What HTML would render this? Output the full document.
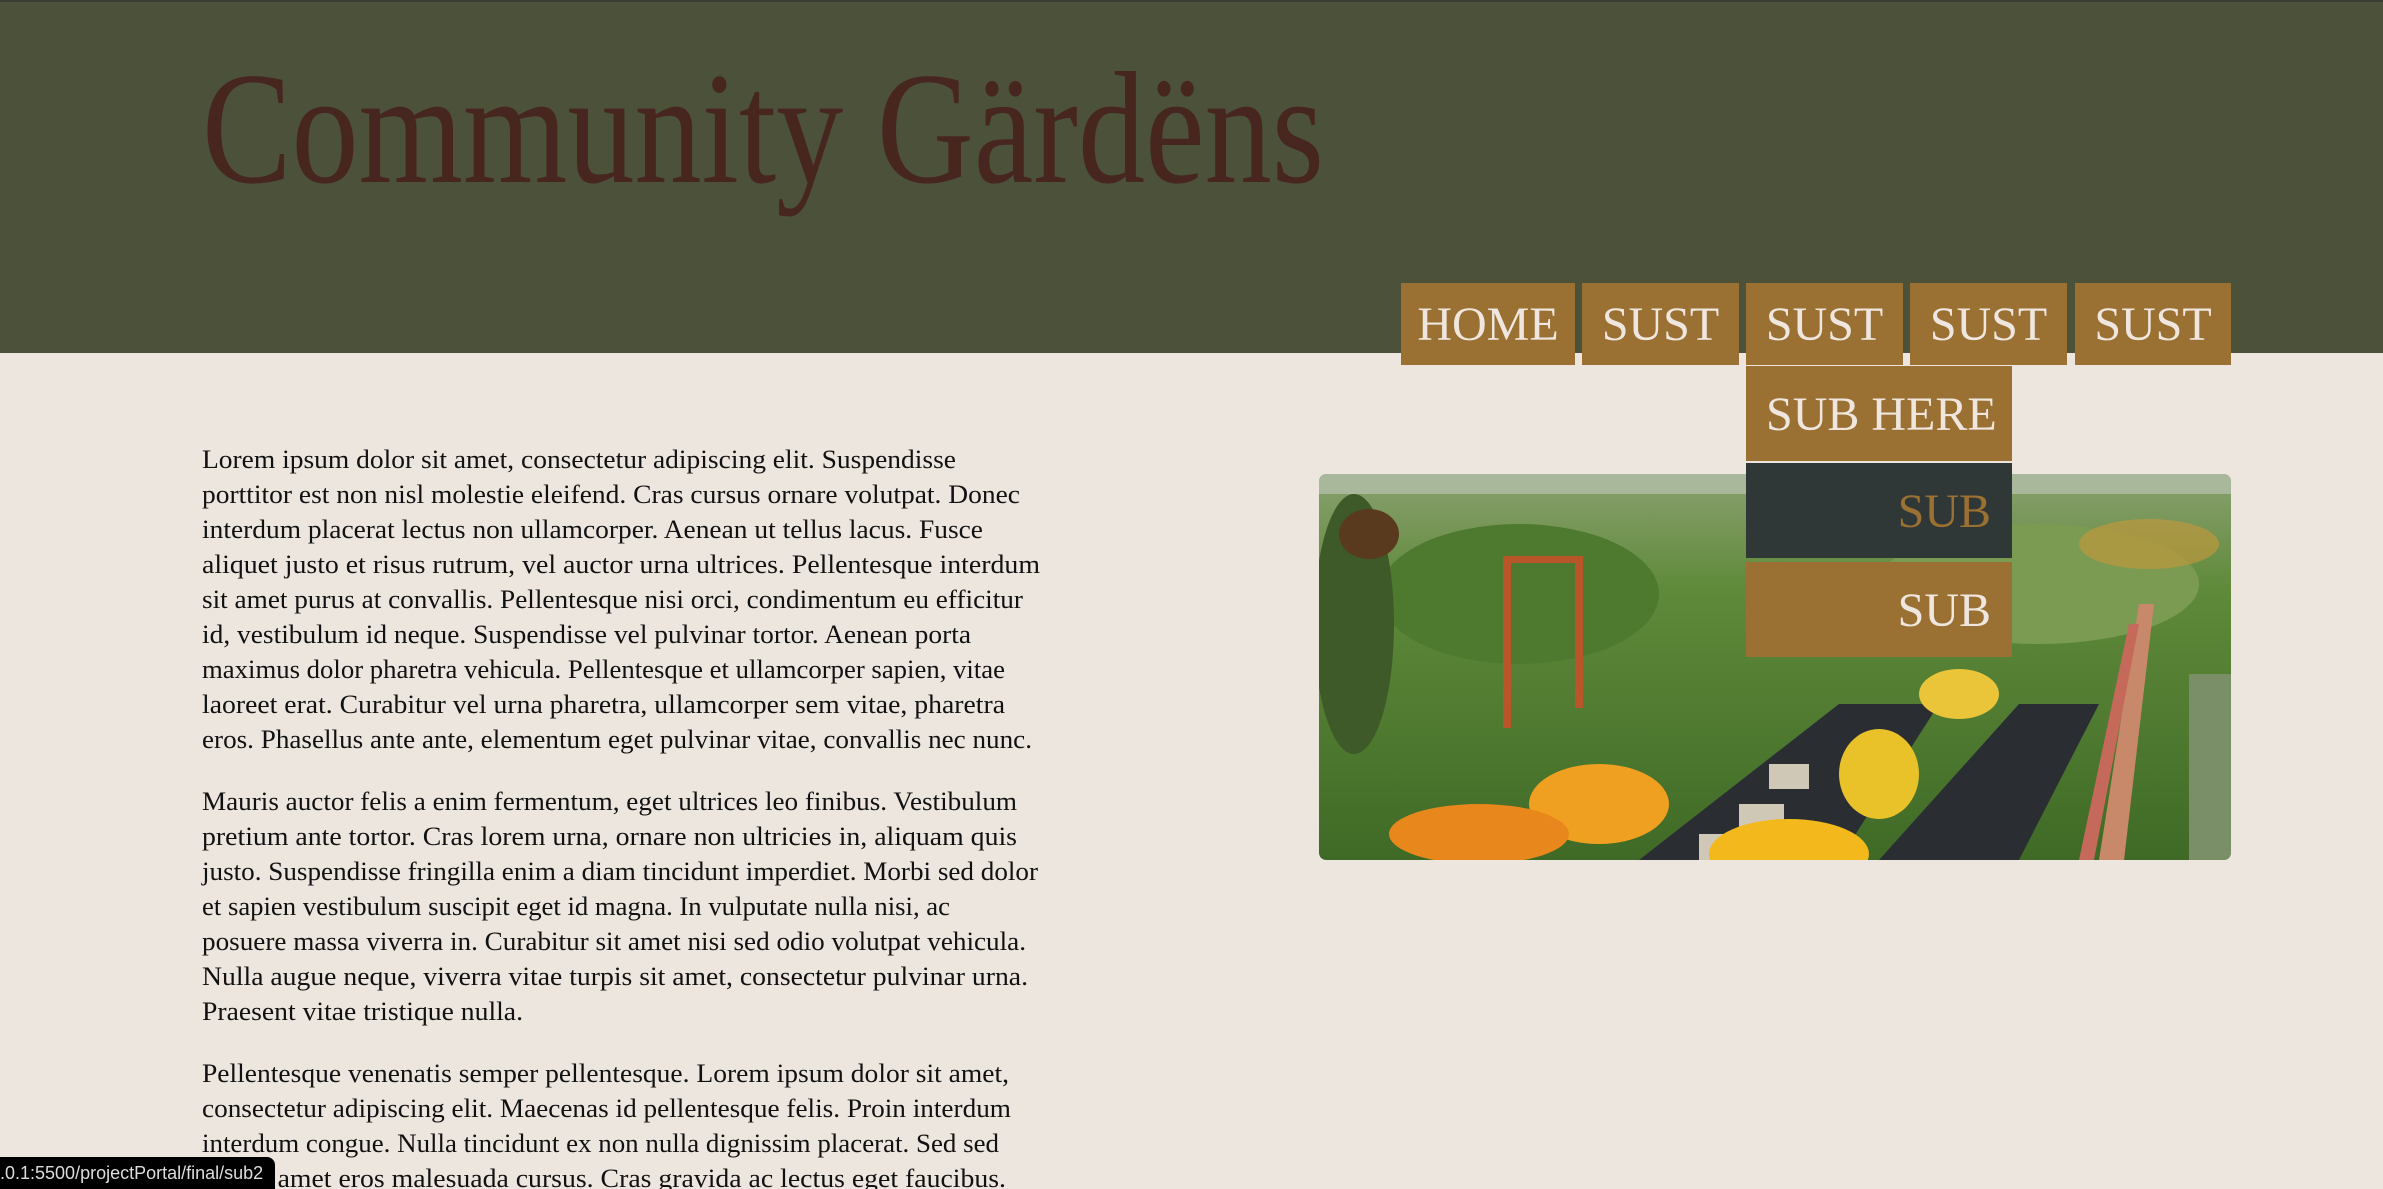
<!DOCTYPE html>
<html><head><meta charset="utf-8"><style>
html,body{margin:0;padding:0;width:2383px;height:1189px;overflow:hidden;background:#ede6df;position:relative}
.hdr{position:absolute;left:0;top:0;width:2383px;height:353px;background:#4c513a;border-top:2px solid #3a3d33;box-sizing:border-box}
.nav{position:absolute;top:283px;height:82px;background:#9a7033;color:#efe7df;font-family:"Liberation Serif",serif;font-size:48px;line-height:84px;text-align:center}
.dd{position:absolute;left:1746px;width:266px;height:95px;font-family:"Liberation Serif",serif;font-size:48px;line-height:97px}
svg{position:absolute;left:0;top:0}
.st{position:absolute;left:0;top:1157px;width:275px;height:34px;background:#000;border-radius:0 8px 0 0;color:#ddd;font-family:"Liberation Sans",sans-serif;font-size:18px;line-height:32px;white-space:nowrap;overflow:hidden}
</style></head><body>
<div class="hdr"></div>
<svg width="2383" height="353"><text x="202" y="182" textLength="1122" lengthAdjust="spacingAndGlyphs" font-family="Liberation Serif" font-size="160" fill="#47261f">Community Gärdëns</text></svg>

<svg width="2383" height="1189" style="z-index:0">
<g font-family="Liberation Serif" font-size="26" fill="#111">
<text x="202" y="468" textLength="754" lengthAdjust="spacingAndGlyphs">Lorem ipsum dolor sit amet, consectetur adipiscing elit. Suspendisse</text>
<text x="202" y="503" textLength="818" lengthAdjust="spacingAndGlyphs">porttitor est non nisl molestie eleifend. Cras cursus ornare volutpat. Donec</text>
<text x="202" y="538" textLength="781" lengthAdjust="spacingAndGlyphs">interdum placerat lectus non ullamcorper. Aenean ut tellus lacus. Fusce</text>
<text x="202" y="573" textLength="838" lengthAdjust="spacingAndGlyphs">aliquet justo et risus rutrum, vel auctor urna ultrices. Pellentesque interdum</text>
<text x="202" y="608" textLength="821" lengthAdjust="spacingAndGlyphs">sit amet purus at convallis. Pellentesque nisi orci, condimentum eu efficitur</text>
<text x="202" y="643" textLength="769" lengthAdjust="spacingAndGlyphs">id, vestibulum id neque. Suspendisse vel pulvinar tortor. Aenean porta</text>
<text x="202" y="678" textLength="803" lengthAdjust="spacingAndGlyphs">maximus dolor pharetra vehicula. Pellentesque et ullamcorper sapien, vitae</text>
<text x="202" y="713" textLength="803" lengthAdjust="spacingAndGlyphs">laoreet erat. Curabitur vel urna pharetra, ullamcorper sem vitae, pharetra</text>
<text x="202" y="748" textLength="830" lengthAdjust="spacingAndGlyphs">eros. Phasellus ante ante, elementum eget pulvinar vitae, convallis nec nunc.</text>
<text x="202" y="810" textLength="815" lengthAdjust="spacingAndGlyphs">Mauris auctor felis a enim fermentum, eget ultrices leo finibus. Vestibulum</text>
<text x="202" y="845" textLength="815" lengthAdjust="spacingAndGlyphs">pretium ante tortor. Cras lorem urna, ornare non ultricies in, aliquam quis</text>
<text x="202" y="880" textLength="836" lengthAdjust="spacingAndGlyphs">justo. Suspendisse fringilla enim a diam tincidunt imperdiet. Morbi sed dolor</text>
<text x="202" y="915" textLength="748" lengthAdjust="spacingAndGlyphs">et sapien vestibulum suscipit eget id magna. In vulputate nulla nisi, ac</text>
<text x="202" y="950" textLength="824" lengthAdjust="spacingAndGlyphs">posuere massa viverra in. Curabitur sit amet nisi sed odio volutpat vehicula.</text>
<text x="202" y="985" textLength="826" lengthAdjust="spacingAndGlyphs">Nulla augue neque, viverra vitae turpis sit amet, consectetur pulvinar urna.</text>
<text x="202" y="1020" textLength="321" lengthAdjust="spacingAndGlyphs">Praesent vitae tristique nulla.</text>
<text x="202" y="1082" textLength="807" lengthAdjust="spacingAndGlyphs">Pellentesque venenatis semper pellentesque. Lorem ipsum dolor sit amet,</text>
<text x="202" y="1117" textLength="809" lengthAdjust="spacingAndGlyphs">consectetur adipiscing elit. Maecenas id pellentesque felis. Proin interdum</text>
<text x="202" y="1152" textLength="797" lengthAdjust="spacingAndGlyphs">interdum congue. Nulla tincidunt ex non nulla dignissim placerat. Sed sed</text>
<text x="202" y="1187" textLength="804" lengthAdjust="spacingAndGlyphs">elit sit amet eros malesuada cursus. Cras gravida ac lectus eget faucibus.</text>
</g></svg>

<svg width="912" height="386" style="left:1319px;top:474px;border-radius:7px" viewBox="0 0 912 386">
<defs><clipPath id="c"><rect width="912" height="386" rx="7"/></clipPath>
<linearGradient id="g" x1="0" y1="0" x2="0" y2="1"><stop offset="0" stop-color="#8aa070"/><stop offset=".3" stop-color="#5f8a3a"/><stop offset="1" stop-color="#3f6a26"/></linearGradient></defs>
<g clip-path="url(#c)">
<rect width="912" height="386" fill="url(#g)"/>
<rect x="0" y="0" width="912" height="20" fill="#a9b79a"/>
<ellipse cx="200" cy="120" rx="140" ry="70" fill="#4d7a2e"/>
<ellipse cx="720" cy="110" rx="160" ry="60" fill="#7b9a52"/>
<ellipse cx="830" cy="70" rx="70" ry="25" fill="#c99a3a" opacity=".6"/>
<polygon points="320,386 520,230 620,230 520,386" fill="#2a2e33"/>
<polygon points="560,386 700,230 780,230 700,386" fill="#2a2e33"/>
<rect x="450" y="290" width="40" height="25" fill="#cfc8b6"/><rect x="420" y="330" width="45" height="28" fill="#cfc8b6"/><rect x="380" y="360" width="50" height="26" fill="#cfc8b6"/>
<polygon points="780,386 820,130 835,130 805,386" fill="#c8896a"/>
<polygon points="760,386 810,150 820,150 775,386" fill="#c56a5a"/>
<rect x="184" y="84" width="8" height="170" fill="#b8562a"/><rect x="256" y="84" width="8" height="150" fill="#b8562a"/><rect x="184" y="82" width="80" height="7" fill="#b8562a"/>
<ellipse cx="280" cy="330" rx="70" ry="40" fill="#f0a020"/>
<ellipse cx="160" cy="360" rx="90" ry="30" fill="#e8881c"/>
<ellipse cx="470" cy="380" rx="80" ry="35" fill="#f2b81c"/>
<ellipse cx="560" cy="300" rx="40" ry="45" fill="#e9c22a"/>
<ellipse cx="640" cy="220" rx="40" ry="25" fill="#eac53a"/>
<ellipse cx="35" cy="150" rx="40" ry="130" fill="#3d5a28"/>
<ellipse cx="50" cy="60" rx="30" ry="25" fill="#5a3a1e"/>
<rect x="870" y="200" width="42" height="186" fill="#7a8e68"/>
</g></svg>

<div class="nav" style="left:1401px;width:174px">HOME</div>
<div class="nav" style="left:1582px;width:157px">SUST</div>
<div class="nav" style="left:1746px;width:157px">SUST</div>
<div class="nav" style="left:1910px;width:157px">SUST</div>
<div class="nav" style="left:2075px;width:156px">SUST</div>
<div class="dd" style="top:366px;background:#9a7033;color:#efe7df;padding-left:20px;box-sizing:border-box">SUB HERE</div>
<div class="dd" style="top:463px;background:#2f3737;color:#9a7033;text-align:right;padding-right:21px;box-sizing:border-box">SUB</div>
<div class="dd" style="top:562px;background:#9a7033;color:#efe7df;text-align:right;padding-right:21px;box-sizing:border-box">SUB</div>
<div class="st">.0.1:5500/projectPortal/final/sub2</div>
</body></html>
